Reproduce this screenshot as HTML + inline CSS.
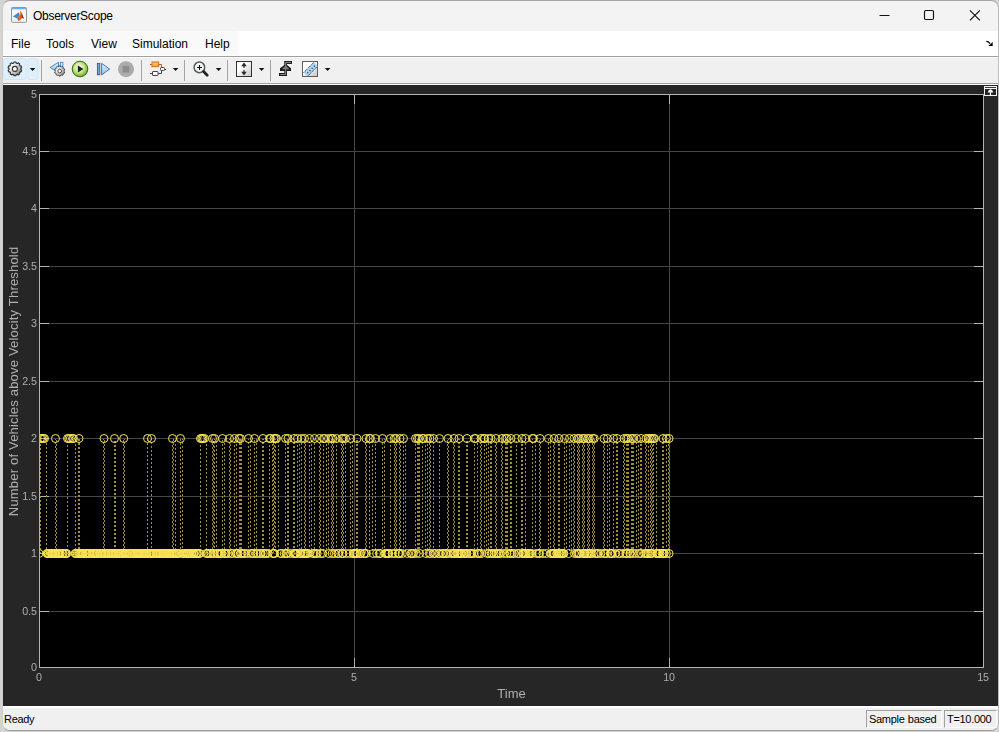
<!DOCTYPE html>
<html><head><meta charset="utf-8"><title>ObserverScope</title>
<style>
html,body{margin:0;padding:0}
body{width:999px;height:732px;overflow:hidden;background:#D4D4D2;position:relative;font-family:"Liberation Sans",Arial,sans-serif;font-size:12px;color:#000}
.win{position:absolute;left:2px;top:0;width:995px;height:729px;border:1px solid;border-color:#A4A4A4 #BCBCBC #9C9C9C #CDCDCB;border-radius:8px;background:#F3F3F3;overflow:hidden;box-sizing:content-box}
.abs{position:absolute}
.title{left:30px;top:7px;font-size:12px;letter-spacing:-0.28px;line-height:16px;white-space:nowrap}
.menubar{left:0;top:30px;width:995px;height:25px;background:#fff}
.menubg{left:0;top:0;width:235px;height:24px;background:#F9F9F9}
.menu span{position:absolute;top:6px;line-height:14px;white-space:nowrap}
.toolbar{left:0;top:56px;width:995px;height:26px;background:#F0F0F0;box-shadow:inset 0 1px 0 #FCFCFC}
.tbtop{left:0;top:55px;width:995px;height:1px;background:#A0A0A0}
.tbline{left:0;top:82px;width:995px;height:1px;background:#A0A0A0;border-bottom:1px solid #fff}
.plot{position:absolute;left:0;top:84px;will-change:transform}
.status{left:0;top:705px;width:995px;height:24px;background:#F0F0F0;border-top:2px solid #fff;box-sizing:border-box;font-size:11px}
.cell{position:absolute;top:2px;height:16px;border:1px solid;border-color:#A0A0A0 #fff #fff #A0A0A0;line-height:16px;text-align:center;white-space:nowrap}
</style></head><body>
<div class="win">
<svg class="abs" style="left:8px;top:6px" width="16" height="16" viewBox="0 0 16 16">
<rect x="0.5" y="0.5" width="15" height="14.800" rx="0.800" fill="#F6F6F6" stroke="#8E959C"/>
<rect x="1" y="1" width="14" height="1.300" fill="#6FAEE2"/>
<path d="M1.900 9.400l5.900-4.100.6 3.200-2.200 2.900z" fill="#3E8ACB"/>
<path d="M6.200 11.400l2-2.700 1.300-4.800c.4.300.8 1 1.200 2.200l2.300 5.800c-1.100-1-1.800-1.300-2.500-.4-.9 1.200-1.900 2.600-3.300 2.200z" fill="#E2521C"/>
<path d="M9.500 3.900c.5 1.700.2 4.800-1 7.200l-1.300 1.500c1.400-1.300 1.800-5 2.300-8.700z" fill="#F9B02A"/>
<path d="M10.700 6.100l2.300 5.800c-.9-.8-1.600-1.300-2.200-1z" fill="#9E241A"/>
</svg>
<div class="abs title">ObserverScope</div>
<svg class="abs" style="left:870px;top:-1px" width="125" height="30" viewBox="0 0 125 30" fill="none" stroke="#111" stroke-width="1.15">
<path d="M6.500 15.500h10"/>
<rect x="51.500" y="10.500" width="9" height="9" rx="1.2"/>
<path d="M96.900 10.300l10 10M106.900 10.300l-10 10"/>
</svg>
<div class="abs menubar"><div class="abs menubg"></div>
<div class="menu"><span style="left:8px">File</span><span style="left:43px">Tools</span><span style="left:88px">View</span><span style="left:129px">Simulation</span><span style="left:202px">Help</span></div>
<svg class="abs" style="left:982px;top:9px" width="10" height="9" viewBox="0 0 10 9"><path d="M1.300 1.400c1.400 0 2.600.6 3.800 2.200" stroke="#000" stroke-width="1.200" fill="none"/><path d="M7.700 6.100V1.900L3.300 6.100z" fill="#000"/></svg>
</div>
<div class="abs tbtop"></div>
<div class="abs toolbar">
<svg class="abs" style="left:0;top:0" width="995" height="27" viewBox="3 57 995 27">
<defs>
<linearGradient id="gg" x1="0" y1="0" x2="1" y2="1"><stop offset="0.15" stop-color="#FFFFFF"/><stop offset="0.6" stop-color="#C4C4C4"/><stop offset="1" stop-color="#6A6A6A"/></linearGradient>
<linearGradient id="gb" x1="0" y1="0" x2="0" y2="1"><stop offset="0" stop-color="#E2F0FB"/><stop offset="1" stop-color="#8FC0E8"/></linearGradient>
<radialGradient id="gp" cx="0.45" cy="0.42" r="0.62"><stop offset="0" stop-color="#FAFDF2"/><stop offset="0.45" stop-color="#D2EC9C"/><stop offset="0.8" stop-color="#86C23A"/><stop offset="1" stop-color="#4F8F1C"/></radialGradient>
<linearGradient id="gw" x1="0" y1="0" x2="1" y2="1"><stop offset="0.35" stop-color="#FFFFFF"/><stop offset="1" stop-color="#C4C4C4"/></linearGradient>
<linearGradient id="go" x1="0" y1="0" x2="0" y2="1"><stop offset="0" stop-color="#FBD088"/><stop offset="1" stop-color="#F4A040"/></linearGradient>
<path id="dd" d="M0 0h5.600l-2.800 3z" fill="#111"/>
<g id="gear"><path d="M-1.25 -5.77L-0.95 -6.83L0.95 -6.83L1.25 -5.77L2.38 -5.40L3.25 -6.09L4.79 -4.97L4.40 -3.93L5.10 -2.97L6.21 -3.02L6.79 -1.21L5.87 -0.59L5.87 0.59L6.79 1.21L6.21 3.02L5.10 2.97L4.40 3.93L4.79 4.97L3.25 6.09L2.38 5.40L1.25 5.77L0.95 6.83L-0.95 6.83L-1.25 5.77L-2.38 5.40L-3.25 6.09L-4.79 4.97L-4.40 3.93L-5.10 2.97L-6.21 3.02L-6.79 1.21L-5.87 0.59L-5.87 -0.59L-6.79 -1.21L-6.21 -3.02L-5.10 -2.97L-4.40 -3.93L-4.79 -4.97L-3.25 -6.09L-2.38 -5.40Z" fill="url(#gg)" stroke="#303030" stroke-width="1.100" stroke-linejoin="round"/><circle r="2.5" fill="#FDFDFD" stroke="#333" stroke-width="1.1"/></g>
</defs>
<!-- gear button highlight -->
<rect x="3.5" y="58.5" width="22.5" height="21" rx="2" fill="#E0EFFC" stroke="#CFE6FA" stroke-width="1"/>
<rect x="28" y="58.5" width="9.8" height="21" rx="2" fill="#E0EFFC" stroke="#CFE6FA" stroke-width="1"/>
<use href="#gear" x="14.9" y="68.9"/>
<use href="#dd" x="29.800" y="68"/>
<!-- separators -->
<g fill="#A3A3A3"><rect x="41" y="60" width="1" height="21"/><rect x="141" y="60" width="1" height="21"/><rect x="184" y="60" width="1" height="21"/><rect x="227" y="60" width="1" height="21"/><rect x="270" y="60" width="1" height="21"/></g>
<!-- step back -->
<path d="M58.500 62.200v10.500l-8.300-5.200z" fill="url(#gb)" stroke="#3F7FB8" stroke-width="0.900" stroke-linejoin="round"/>
<rect x="60.300" y="62.300" width="2.600" height="8" fill="url(#gb)" stroke="#3F7FB8" stroke-width="0.800"/>
<g transform="translate(59.700,71) scale(0.74)"><use href="#gear"/></g>
<!-- play -->
<circle cx="80" cy="69" r="7.800" fill="url(#gp)" stroke="#3C6E12" stroke-width="1"/>
<path d="M77.900 65.600v6.900l5.500-3.400z" fill="#1E1E1E"/>
<!-- step forward -->
<rect x="97.400" y="63.400" width="2.400" height="11.400" fill="#6FA3D6" stroke="#2A62A0" stroke-width="0.900"/>
<path d="M101.600 63.300v11.600l8-5.800z" fill="url(#gb)" stroke="#2F6AA6" stroke-width="0.900" stroke-linejoin="round"/>
<!-- stop -->
<circle cx="126" cy="69.200" r="8" fill="#ABABAB"/>
<rect x="122.700" y="65.900" width="6.600" height="6.600" fill="#8C8C8C"/>
<!-- model icon -->
<g fill="none" stroke-width="1">
<path d="M150 64.500h2M158.500 64.500h3v3" stroke="#C8581A"/>
<rect x="152" y="62" width="6.500" height="4.600" fill="url(#go)" stroke="#E2701C" stroke-width="1.1"/>
<rect x="160.500" y="67.500" width="4" height="3" fill="#fff" stroke="#444" rx="0.800"/>
<path d="M164.500 69.500h1.500M150 73.500h2.500M158 73.500h3.500v-3" stroke="#444"/>
<rect x="152.500" y="71.500" width="5.500" height="4" fill="#fff" stroke="#444" rx="0.500"/>
</g>
<use href="#dd" x="172.800" y="68"/>
<!-- zoom -->
<circle cx="199.400" cy="67.400" r="5.300" fill="#F2F7FC" stroke="#5A5A5A" stroke-width="1.500"/>
<path d="M197 67.500h5M199.500 65v5" stroke="#111" stroke-width="1.100"/>
<path d="M203.600 71.600l3.600 3.600" stroke="#222" stroke-width="2.800" stroke-linecap="round"/>
<use href="#dd" x="215.800" y="68"/>
<!-- scale axes -->
<rect x="236.500" y="61.500" width="15" height="15" fill="url(#gw)" stroke="#333" stroke-width="1"/>
<path d="M244 64v4M244 74v-4" stroke="#2A2A2A" stroke-width="1.200"/>
<path d="M241.200 66.200l2.800-3.600 2.800 3.600zM241.200 71.800l2.800 3.600 2.800-3.600z" fill="#2A2A2A"/>
<use href="#dd" x="258.800" y="68"/>
<!-- trigger step -->
<path d="M284.300 61h7.700v2.700h-5v4.600M285.800 63.900l5.200 4.400v2.700h-4v5h-8v-3h5.300v-2h-4.300v-2.700z" fill="#1A1A1A"/>
<path d="M284.300 61h7.700v2.700h-5v2h-2.700z" fill="#1A1A1A"/>
<path d="M280.300 74.500h5.400v-12.100h5.300" fill="none" stroke="#9A9A9A" stroke-width="0.900"/>
<path d="M285.700 65.600l3.900 3.700h-7.800z" fill="#7C7C7C"/>
<!-- ruler -->
<rect x="302.500" y="61.500" width="15" height="15" fill="url(#gw)" stroke="#5E5E5E" stroke-width="1"/>
<path d="M303.600 72.600l10.300-10.300 3.600 3.600v.6l-10 10z" fill="#A9D4F2"/>
<path d="M303.600 72.600l10.300-10.300M307.400 76.400l10.100-10.100" stroke="#2E2E2E" stroke-width="0.900" stroke-dasharray="1.300 0.700" fill="none"/>
<path d="M307.300 72.300l.9.900M309.500 70.100l.9.900M311.700 67.900l.9.900M313.900 65.700l.9.900" stroke="#1E3E5E" stroke-width="1.100"/>
<use href="#dd" x="324.800" y="68"/>
</svg>

</div>
<div class="abs tbline"></div>
<svg class="plot" width="995" height="621" viewBox="3 85 995 621" shape-rendering="crispEdges">
<defs>
<clipPath id="axclip"><rect x="39.5" y="94" width="944" height="573"/></clipPath>
<pattern id="d0" width="4" height="4" patternUnits="userSpaceOnUse" y="0"><rect width="4" height="2" fill="#A08E3A"/></pattern>
<pattern id="d1" width="4" height="4" patternUnits="userSpaceOnUse" y="1"><rect width="4" height="2" fill="#A08E3A"/></pattern>
<pattern id="d2" width="4" height="4" patternUnits="userSpaceOnUse" y="2"><rect width="4" height="2" fill="#A08E3A"/></pattern>
<pattern id="d3" width="4" height="4" patternUnits="userSpaceOnUse" y="3"><rect width="4" height="2" fill="#A08E3A"/></pattern>
<circle id="c" r="4" fill="none" stroke="#F9E557" stroke-width="1" shape-rendering="geometricPrecision"/>
</defs>
<rect x="3" y="85" width="995" height="621" fill="#262626"/>
<rect x="39" y="94" width="945" height="574" fill="#000"/>
<rect x="40" y="151" width="943" height="1" fill="#46464A"/><rect x="40" y="151" width="9" height="1" fill="#B4B4B4"/><rect x="974" y="151" width="9" height="1" fill="#B4B4B4"/><rect x="40" y="208" width="943" height="1" fill="#46464A"/><rect x="40" y="208" width="9" height="1" fill="#B4B4B4"/><rect x="974" y="208" width="9" height="1" fill="#B4B4B4"/><rect x="40" y="266" width="943" height="1" fill="#46464A"/><rect x="40" y="266" width="9" height="1" fill="#B4B4B4"/><rect x="974" y="266" width="9" height="1" fill="#B4B4B4"/><rect x="40" y="323" width="943" height="1" fill="#46464A"/><rect x="40" y="323" width="9" height="1" fill="#B4B4B4"/><rect x="974" y="323" width="9" height="1" fill="#B4B4B4"/><rect x="40" y="381" width="943" height="1" fill="#46464A"/><rect x="40" y="381" width="9" height="1" fill="#B4B4B4"/><rect x="974" y="381" width="9" height="1" fill="#B4B4B4"/><rect x="40" y="438" width="943" height="1" fill="#46464A"/><rect x="40" y="438" width="9" height="1" fill="#B4B4B4"/><rect x="974" y="438" width="9" height="1" fill="#B4B4B4"/><rect x="40" y="496" width="943" height="1" fill="#46464A"/><rect x="40" y="496" width="9" height="1" fill="#B4B4B4"/><rect x="974" y="496" width="9" height="1" fill="#B4B4B4"/><rect x="40" y="553" width="943" height="1" fill="#46464A"/><rect x="40" y="553" width="9" height="1" fill="#B4B4B4"/><rect x="974" y="553" width="9" height="1" fill="#B4B4B4"/><rect x="40" y="611" width="943" height="1" fill="#46464A"/><rect x="40" y="611" width="9" height="1" fill="#B4B4B4"/><rect x="974" y="611" width="9" height="1" fill="#B4B4B4"/><rect x="354" y="95" width="1" height="572" fill="#46464A"/><rect x="354" y="658" width="1" height="9" fill="#B4B4B4"/><rect x="354" y="95" width="1" height="9" fill="#B4B4B4"/><rect x="669" y="95" width="1" height="572" fill="#46464A"/><rect x="669" y="658" width="1" height="9" fill="#B4B4B4"/><rect x="669" y="95" width="1" height="9" fill="#B4B4B4"/>
<g clip-path="url(#axclip)">
<rect x="40" y="439" width="1" height="114" fill="url(#d0)"/><rect x="46" y="439" width="1" height="114" fill="url(#d3)"/><rect x="55" y="439" width="1" height="114" fill="url(#d2)"/><rect x="56" y="439" width="1" height="114" fill="url(#d0)"/><rect x="67" y="439" width="1" height="114" fill="url(#d1)"/><rect x="75" y="439" width="1" height="114" fill="url(#d0)"/><rect x="78" y="439" width="2" height="114" fill="url(#d3)"/><rect x="103" y="439" width="1" height="114" fill="url(#d2)"/><rect x="104" y="439" width="1" height="114" fill="url(#d0)"/><rect x="114" y="439" width="2" height="114" fill="url(#d1)"/><rect x="123" y="439" width="1" height="114" fill="url(#d0)"/><rect x="124" y="439" width="1" height="114" fill="url(#d2)"/><rect x="147" y="439" width="1" height="114" fill="url(#d3)"/><rect x="151" y="439" width="1" height="114" fill="url(#d2)"/><rect x="172" y="439" width="1" height="114" fill="url(#d1)"/><rect x="173" y="439" width="1" height="114" fill="url(#d3)"/><rect x="175" y="439" width="1" height="114" fill="url(#d0)"/><rect x="180" y="439" width="1" height="114" fill="url(#d3)"/><rect x="182" y="439" width="1" height="114" fill="url(#d2)"/><rect x="200" y="439" width="1" height="114" fill="url(#d1)"/><rect x="206" y="439" width="1" height="114" fill="url(#d0)"/><rect x="212" y="439" width="1" height="114" fill="url(#d3)"/><rect x="213" y="439" width="1" height="114" fill="url(#d1)"/><rect x="214" y="439" width="1" height="114" fill="url(#d2)"/><rect x="216" y="439" width="1" height="114" fill="url(#d1)"/><rect x="222" y="439" width="1" height="114" fill="url(#d0)"/><rect x="224" y="439" width="1" height="114" fill="url(#d3)"/><rect x="229" y="439" width="1" height="114" fill="url(#d2)"/><rect x="230" y="439" width="1" height="114" fill="url(#d0)"/><rect x="234" y="439" width="1" height="114" fill="url(#d1)"/><rect x="236" y="439" width="1" height="114" fill="url(#d0)"/><rect x="239" y="439" width="3" height="114" fill="url(#d3)"/><rect x="248" y="439" width="1" height="114" fill="url(#d2)"/><rect x="250" y="439" width="1" height="114" fill="url(#d1)"/><rect x="254" y="439" width="1" height="114" fill="url(#d0)"/><rect x="256" y="439" width="1" height="114" fill="url(#d3)"/><rect x="262" y="439" width="2" height="114" fill="url(#d2)"/><rect x="269" y="439" width="1" height="114" fill="url(#d1)"/><rect x="272" y="439" width="1" height="114" fill="url(#d0)"/><rect x="273" y="439" width="1" height="114" fill="url(#d3)"/><rect x="274" y="439" width="1" height="114" fill="url(#d1)"/><rect x="275" y="439" width="1" height="114" fill="url(#d2)"/><rect x="278" y="439" width="1" height="114" fill="url(#d1)"/><rect x="285" y="439" width="1" height="114" fill="url(#d0)"/><rect x="287" y="439" width="2" height="114" fill="url(#d3)"/><rect x="293" y="439" width="2" height="114" fill="url(#d2)"/><rect x="297" y="439" width="1" height="114" fill="url(#d1)"/><rect x="299" y="439" width="1" height="114" fill="url(#d0)"/><rect x="301" y="439" width="1" height="114" fill="url(#d3)"/><rect x="304" y="439" width="1" height="114" fill="url(#d2)"/><rect x="305" y="439" width="1" height="114" fill="url(#d0)"/><rect x="309" y="439" width="1" height="114" fill="url(#d1)"/><rect x="311" y="439" width="1" height="114" fill="url(#d0)"/><rect x="314" y="439" width="1" height="114" fill="url(#d3)"/><rect x="319" y="439" width="1" height="114" fill="url(#d2)"/><rect x="320" y="439" width="1" height="114" fill="url(#d0)"/><rect x="323" y="439" width="1" height="114" fill="url(#d1)"/><rect x="326" y="439" width="1" height="114" fill="url(#d0)"/><rect x="328" y="439" width="1" height="114" fill="url(#d3)"/><rect x="331" y="439" width="1" height="114" fill="url(#d2)"/><rect x="332" y="439" width="1" height="114" fill="url(#d0)"/><rect x="333" y="439" width="1" height="114" fill="url(#d2)"/><rect x="336" y="439" width="1" height="114" fill="url(#d1)"/><rect x="341" y="439" width="1" height="114" fill="url(#d0)"/><rect x="342" y="439" width="1" height="114" fill="url(#d2)"/><rect x="343" y="439" width="1" height="114" fill="url(#d0)"/><rect x="345" y="439" width="1" height="114" fill="url(#d3)"/><rect x="350" y="439" width="1" height="114" fill="url(#d2)"/><rect x="352" y="439" width="1" height="114" fill="url(#d1)"/><rect x="356" y="439" width="2" height="114" fill="url(#d0)"/><rect x="365" y="439" width="1" height="114" fill="url(#d3)"/><rect x="366" y="439" width="1" height="114" fill="url(#d1)"/><rect x="369" y="439" width="1" height="114" fill="url(#d2)"/><rect x="372" y="439" width="1" height="114" fill="url(#d1)"/><rect x="375" y="439" width="1" height="114" fill="url(#d0)"/><rect x="382" y="439" width="1" height="114" fill="url(#d3)"/><rect x="384" y="439" width="1" height="114" fill="url(#d2)"/><rect x="390" y="439" width="1" height="114" fill="url(#d1)"/><rect x="394" y="439" width="1" height="114" fill="url(#d0)"/><rect x="395" y="439" width="1" height="114" fill="url(#d2)"/><rect x="396" y="439" width="1" height="114" fill="url(#d0)"/><rect x="399" y="439" width="1" height="114" fill="url(#d3)"/><rect x="400" y="439" width="1" height="114" fill="url(#d1)"/><rect x="403" y="439" width="1" height="114" fill="url(#d2)"/><rect x="405" y="439" width="1" height="114" fill="url(#d1)"/><rect x="415" y="439" width="1" height="114" fill="url(#d0)"/><rect x="417" y="439" width="3" height="114" fill="url(#d3)"/><rect x="422" y="439" width="1" height="114" fill="url(#d2)"/><rect x="425" y="439" width="1" height="114" fill="url(#d1)"/><rect x="427" y="439" width="1" height="114" fill="url(#d0)"/><rect x="429" y="439" width="1" height="114" fill="url(#d3)"/><rect x="430" y="439" width="1" height="114" fill="url(#d1)"/><rect x="433" y="439" width="1" height="114" fill="url(#d2)"/><rect x="439" y="439" width="1" height="114" fill="url(#d1)"/><rect x="447" y="439" width="1" height="114" fill="url(#d0)"/><rect x="448" y="439" width="1" height="114" fill="url(#d2)"/><rect x="453" y="439" width="1" height="114" fill="url(#d3)"/><rect x="454" y="439" width="1" height="114" fill="url(#d1)"/><rect x="458" y="439" width="2" height="114" fill="url(#d2)"/><rect x="466" y="439" width="2" height="114" fill="url(#d1)"/><rect x="474" y="439" width="1" height="114" fill="url(#d0)"/><rect x="477" y="439" width="1" height="114" fill="url(#d3)"/><rect x="480" y="439" width="1" height="114" fill="url(#d2)"/><rect x="481" y="439" width="1" height="114" fill="url(#d0)"/><rect x="484" y="439" width="1" height="114" fill="url(#d1)"/><rect x="486" y="439" width="1" height="114" fill="url(#d0)"/><rect x="488" y="439" width="1" height="114" fill="url(#d3)"/><rect x="490" y="439" width="2" height="114" fill="url(#d2)"/><rect x="495" y="439" width="1" height="114" fill="url(#d1)"/><rect x="496" y="439" width="1" height="114" fill="url(#d3)"/><rect x="501" y="439" width="1" height="114" fill="url(#d0)"/><rect x="502" y="439" width="1" height="114" fill="url(#d2)"/><rect x="505" y="439" width="3" height="114" fill="url(#d3)"/><rect x="510" y="439" width="2" height="114" fill="url(#d2)"/><rect x="516" y="439" width="1" height="114" fill="url(#d1)"/><rect x="521" y="439" width="2" height="114" fill="url(#d0)"/><rect x="525" y="439" width="1" height="114" fill="url(#d3)"/><rect x="532" y="439" width="1" height="114" fill="url(#d2)"/><rect x="535" y="439" width="1" height="114" fill="url(#d1)"/><rect x="539" y="439" width="1" height="114" fill="url(#d0)"/><rect x="540" y="439" width="1" height="114" fill="url(#d2)"/><rect x="548" y="439" width="1" height="114" fill="url(#d3)"/><rect x="550" y="439" width="1" height="114" fill="url(#d2)"/><rect x="553" y="439" width="1" height="114" fill="url(#d1)"/><rect x="554" y="439" width="1" height="114" fill="url(#d3)"/><rect x="558" y="439" width="2" height="114" fill="url(#d0)"/><rect x="564" y="439" width="1" height="114" fill="url(#d3)"/><rect x="566" y="439" width="1" height="114" fill="url(#d2)"/><rect x="569" y="439" width="1" height="114" fill="url(#d1)"/><rect x="571" y="439" width="1" height="114" fill="url(#d0)"/><rect x="573" y="439" width="1" height="114" fill="url(#d3)"/><rect x="574" y="439" width="1" height="114" fill="url(#d1)"/><rect x="577" y="439" width="1" height="114" fill="url(#d2)"/><rect x="578" y="439" width="1" height="114" fill="url(#d0)"/><rect x="579" y="439" width="1" height="114" fill="url(#d2)"/><rect x="582" y="439" width="1" height="114" fill="url(#d1)"/><rect x="583" y="439" width="1" height="114" fill="url(#d3)"/><rect x="584" y="439" width="1" height="114" fill="url(#d1)"/><rect x="587" y="439" width="1" height="114" fill="url(#d0)"/><rect x="588" y="439" width="1" height="114" fill="url(#d2)"/><rect x="589" y="439" width="1" height="114" fill="url(#d0)"/><rect x="592" y="439" width="1" height="114" fill="url(#d3)"/><rect x="593" y="439" width="1" height="114" fill="url(#d1)"/><rect x="594" y="439" width="1" height="114" fill="url(#d3)"/><rect x="603" y="439" width="1" height="114" fill="url(#d2)"/><rect x="604" y="439" width="1" height="114" fill="url(#d0)"/><rect x="607" y="439" width="1" height="114" fill="url(#d1)"/><rect x="609" y="439" width="1" height="114" fill="url(#d0)"/><rect x="613" y="439" width="1" height="114" fill="url(#d3)"/><rect x="616" y="439" width="2" height="114" fill="url(#d2)"/><rect x="623" y="439" width="1" height="114" fill="url(#d1)"/><rect x="624" y="439" width="1" height="114" fill="url(#d3)"/><rect x="626" y="439" width="3" height="114" fill="url(#d0)"/><rect x="631" y="439" width="3" height="114" fill="url(#d3)"/><rect x="636" y="439" width="1" height="114" fill="url(#d2)"/><rect x="638" y="439" width="1" height="114" fill="url(#d1)"/><rect x="640" y="439" width="2" height="114" fill="url(#d0)"/><rect x="645" y="439" width="1" height="114" fill="url(#d3)"/><rect x="646" y="439" width="1" height="114" fill="url(#d1)"/><rect x="648" y="439" width="1" height="114" fill="url(#d2)"/><rect x="650" y="439" width="1" height="114" fill="url(#d1)"/><rect x="651" y="439" width="1" height="114" fill="url(#d3)"/><rect x="652" y="439" width="1" height="114" fill="url(#d1)"/><rect x="653" y="439" width="1" height="114" fill="url(#d0)"/><rect x="656" y="439" width="1" height="114" fill="url(#d3)"/><rect x="662" y="439" width="2" height="114" fill="url(#d2)"/><rect x="666" y="439" width="1" height="114" fill="url(#d1)"/><rect x="668" y="439" width="1" height="114" fill="url(#d0)"/><rect x="669" y="439" width="1" height="114" fill="url(#d2)"/>
<use href="#c" x="40.5" y="438.5"/><use href="#c" x="41.8" y="438.5"/><use href="#c" x="43.4" y="438.5"/><use href="#c" x="44.5" y="438.5"/><use href="#c" x="55.5" y="438.5"/><use href="#c" x="67.5" y="438.5"/><use href="#c" x="68.8" y="438.5"/><use href="#c" x="70.4" y="438.5"/><use href="#c" x="72.5" y="438.5"/><use href="#c" x="73.5" y="438.5"/><use href="#c" x="79" y="438.5"/><use href="#c" x="104" y="438.5"/><use href="#c" x="114.5" y="438.5"/><use href="#c" x="123.7" y="438.5"/><use href="#c" x="147.5" y="438.5"/><use href="#c" x="151.5" y="438.5"/><use href="#c" x="172.5" y="438.5"/><use href="#c" x="180.5" y="438.5"/><use href="#c" x="200.5" y="438.5"/><use href="#c" x="201.8" y="438.5"/><use href="#c" x="203.0" y="438.5"/><use href="#c" x="204.5" y="438.5"/><use href="#c" x="212.5" y="438.5"/><use href="#c" x="214.5" y="438.5"/><use href="#c" x="222.5" y="438.5"/><use href="#c" x="229.5" y="438.5"/><use href="#c" x="234.5" y="438.5"/><use href="#c" x="239" y="438.5"/><use href="#c" x="240.5" y="438.5"/><use href="#c" x="248.5" y="438.5"/><use href="#c" x="254.5" y="438.5"/><use href="#c" x="263" y="438.5"/><use href="#c" x="269.5" y="438.5"/><use href="#c" x="270.5" y="438.5"/><use href="#c" x="274" y="438.5"/><use href="#c" x="275.5" y="438.5"/><use href="#c" x="276.5" y="438.5"/><use href="#c" x="285.5" y="438.5"/><use href="#c" x="288" y="438.5"/><use href="#c" x="294" y="438.5"/><use href="#c" x="297.5" y="438.5"/><use href="#c" x="301.5" y="438.5"/><use href="#c" x="304.5" y="438.5"/><use href="#c" x="309.5" y="438.5"/><use href="#c" x="314.5" y="438.5"/><use href="#c" x="319.5" y="438.5"/><use href="#c" x="323.5" y="438.5"/><use href="#c" x="324.5" y="438.5"/><use href="#c" x="328.5" y="438.5"/><use href="#c" x="331.3" y="438.5"/><use href="#c" x="332.8" y="438.5"/><use href="#c" x="336.5" y="438.5"/><use href="#c" x="341.8" y="438.5"/><use href="#c" x="343.3" y="438.5"/><use href="#c" x="345.5" y="438.5"/><use href="#c" x="350.5" y="438.5"/><use href="#c" x="357" y="438.5"/><use href="#c" x="366" y="438.5"/><use href="#c" x="369.5" y="438.5"/><use href="#c" x="370.5" y="438.5"/><use href="#c" x="375.5" y="438.5"/><use href="#c" x="382.5" y="438.5"/><use href="#c" x="390.5" y="438.5"/><use href="#c" x="394.3" y="438.5"/><use href="#c" x="395.8" y="438.5"/><use href="#c" x="400" y="438.5"/><use href="#c" x="403.5" y="438.5"/><use href="#c" x="415.5" y="438.5"/><use href="#c" x="417.5" y="438.5"/><use href="#c" x="419.0" y="438.5"/><use href="#c" x="422.5" y="438.5"/><use href="#c" x="423.5" y="438.5"/><use href="#c" x="427.5" y="438.5"/><use href="#c" x="430" y="438.5"/><use href="#c" x="433.5" y="438.5"/><use href="#c" x="439.5" y="438.5"/><use href="#c" x="448" y="438.5"/><use href="#c" x="454" y="438.5"/><use href="#c" x="459" y="438.5"/><use href="#c" x="467" y="438.5"/><use href="#c" x="474.5" y="438.5"/><use href="#c" x="475.5" y="438.5"/><use href="#c" x="481" y="438.5"/><use href="#c" x="484" y="438.5"/><use href="#c" x="484.5" y="438.5"/><use href="#c" x="488.5" y="438.5"/><use href="#c" x="491" y="438.5"/><use href="#c" x="496" y="438.5"/><use href="#c" x="502" y="438.5"/><use href="#c" x="505.5" y="438.5"/><use href="#c" x="507.0" y="438.5"/><use href="#c" x="511" y="438.5"/><use href="#c" x="516.5" y="438.5"/><use href="#c" x="522" y="438.5"/><use href="#c" x="525.5" y="438.5"/><use href="#c" x="532.5" y="438.5"/><use href="#c" x="533.5" y="438.5"/><use href="#c" x="540" y="438.5"/><use href="#c" x="548.5" y="438.5"/><use href="#c" x="554" y="438.5"/><use href="#c" x="559" y="438.5"/><use href="#c" x="564.5" y="438.5"/><use href="#c" x="569.5" y="438.5"/><use href="#c" x="574" y="438.5"/><use href="#c" x="577.8" y="438.5"/><use href="#c" x="579.3" y="438.5"/><use href="#c" x="582.8" y="438.5"/><use href="#c" x="584.3" y="438.5"/><use href="#c" x="587.8" y="438.5"/><use href="#c" x="589.3" y="438.5"/><use href="#c" x="592.8" y="438.5"/><use href="#c" x="594.3" y="438.5"/><use href="#c" x="604" y="438.5"/><use href="#c" x="607.5" y="438.5"/><use href="#c" x="613.5" y="438.5"/><use href="#c" x="617" y="438.5"/><use href="#c" x="624" y="438.5"/><use href="#c" x="626.5" y="438.5"/><use href="#c" x="628.0" y="438.5"/><use href="#c" x="631.5" y="438.5"/><use href="#c" x="633.0" y="438.5"/><use href="#c" x="636.5" y="438.5"/><use href="#c" x="641" y="438.5"/><use href="#c" x="646" y="438.5"/><use href="#c" x="648.5" y="438.5"/><use href="#c" x="650.3" y="438.5"/><use href="#c" x="651.8" y="438.5"/><use href="#c" x="653.5" y="438.5"/><use href="#c" x="654.5" y="438.5"/><use href="#c" x="663" y="438.5"/><use href="#c" x="666.5" y="438.5"/><use href="#c" x="669" y="438.5"/><use href="#c" x="39.0" y="553.5"/><use href="#c" x="47.0" y="553.5"/><use href="#c" x="47.5" y="553.5"/><use href="#c" x="48.2" y="553.5"/><use href="#c" x="48.7" y="553.5"/><use href="#c" x="50.3" y="553.5"/><use href="#c" x="51.3" y="553.5"/><use href="#c" x="51.7" y="553.5"/><use href="#c" x="52.2" y="553.5"/><use href="#c" x="52.9" y="553.5"/><use href="#c" x="53.3" y="553.5"/><use href="#c" x="54.3" y="553.5"/><use href="#c" x="54.7" y="553.5"/><use href="#c" x="55.4" y="553.5"/><use href="#c" x="55.8" y="553.5"/><use href="#c" x="57.4" y="553.5"/><use href="#c" x="58.0" y="553.5"/><use href="#c" x="58.8" y="553.5"/><use href="#c" x="59.8" y="553.5"/><use href="#c" x="60.4" y="553.5"/><use href="#c" x="62.0" y="553.5"/><use href="#c" x="62.5" y="553.5"/><use href="#c" x="63.3" y="553.5"/><use href="#c" x="64.9" y="553.5"/><use href="#c" x="65.5" y="553.5"/><use href="#c" x="66.0" y="553.5"/><use href="#c" x="66.7" y="553.5"/><use href="#c" x="75.1" y="553.5"/><use href="#c" x="76.0" y="553.5"/><use href="#c" x="77.2" y="553.5"/><use href="#c" x="78.4" y="553.5"/><use href="#c" x="79.3" y="553.5"/><use href="#c" x="80.1" y="553.5"/><use href="#c" x="80.8" y="553.5"/><use href="#c" x="81.4" y="553.5"/><use href="#c" x="82.1" y="553.5"/><use href="#c" x="82.6" y="553.5"/><use href="#c" x="83.4" y="553.5"/><use href="#c" x="85.0" y="553.5"/><use href="#c" x="86.2" y="553.5"/><use href="#c" x="87.1" y="553.5"/><use href="#c" x="88.3" y="553.5"/><use href="#c" x="89.1" y="553.5"/><use href="#c" x="89.6" y="553.5"/><use href="#c" x="90.1" y="553.5"/><use href="#c" x="91.7" y="553.5"/><use href="#c" x="92.7" y="553.5"/><use href="#c" x="93.3" y="553.5"/><use href="#c" x="94.2" y="553.5"/><use href="#c" x="94.8" y="553.5"/><use href="#c" x="96.0" y="553.5"/><use href="#c" x="97.0" y="553.5"/><use href="#c" x="97.4" y="553.5"/><use href="#c" x="97.9" y="553.5"/><use href="#c" x="99.5" y="553.5"/><use href="#c" x="100.4" y="553.5"/><use href="#c" x="101.3" y="553.5"/><use href="#c" x="102.2" y="553.5"/><use href="#c" x="103.4" y="553.5"/><use href="#c" x="104.6" y="553.5"/><use href="#c" x="105.1" y="553.5"/><use href="#c" x="105.6" y="553.5"/><use href="#c" x="106.4" y="553.5"/><use href="#c" x="107.6" y="553.5"/><use href="#c" x="108.1" y="553.5"/><use href="#c" x="108.5" y="553.5"/><use href="#c" x="109.3" y="553.5"/><use href="#c" x="110.5" y="553.5"/><use href="#c" x="111.3" y="553.5"/><use href="#c" x="112.3" y="553.5"/><use href="#c" x="113.2" y="553.5"/><use href="#c" x="113.6" y="553.5"/><use href="#c" x="114.8" y="553.5"/><use href="#c" x="115.7" y="553.5"/><use href="#c" x="116.3" y="553.5"/><use href="#c" x="116.8" y="553.5"/><use href="#c" x="118.0" y="553.5"/><use href="#c" x="118.4" y="553.5"/><use href="#c" x="119.1" y="553.5"/><use href="#c" x="119.9" y="553.5"/><use href="#c" x="120.5" y="553.5"/><use href="#c" x="121.2" y="553.5"/><use href="#c" x="122.2" y="553.5"/><use href="#c" x="123.2" y="553.5"/><use href="#c" x="124.4" y="553.5"/><use href="#c" x="124.9" y="553.5"/><use href="#c" x="125.5" y="553.5"/><use href="#c" x="126.7" y="553.5"/><use href="#c" x="127.7" y="553.5"/><use href="#c" x="129.3" y="553.5"/><use href="#c" x="130.1" y="553.5"/><use href="#c" x="130.7" y="553.5"/><use href="#c" x="131.7" y="553.5"/><use href="#c" x="133.3" y="553.5"/><use href="#c" x="134.1" y="553.5"/><use href="#c" x="135.1" y="553.5"/><use href="#c" x="136.0" y="553.5"/><use href="#c" x="137.0" y="553.5"/><use href="#c" x="137.7" y="553.5"/><use href="#c" x="138.3" y="553.5"/><use href="#c" x="138.8" y="553.5"/><use href="#c" x="139.4" y="553.5"/><use href="#c" x="140.0" y="553.5"/><use href="#c" x="140.7" y="553.5"/><use href="#c" x="141.4" y="553.5"/><use href="#c" x="141.8" y="553.5"/><use href="#c" x="143.0" y="553.5"/><use href="#c" x="143.6" y="553.5"/><use href="#c" x="144.4" y="553.5"/><use href="#c" x="145.2" y="553.5"/><use href="#c" x="145.6" y="553.5"/><use href="#c" x="146.2" y="553.5"/><use href="#c" x="147.2" y="553.5"/><use href="#c" x="148.8" y="553.5"/><use href="#c" x="149.7" y="553.5"/><use href="#c" x="150.6" y="553.5"/><use href="#c" x="151.2" y="553.5"/><use href="#c" x="152.8" y="553.5"/><use href="#c" x="153.2" y="553.5"/><use href="#c" x="154.4" y="553.5"/><use href="#c" x="156.0" y="553.5"/><use href="#c" x="157.0" y="553.5"/><use href="#c" x="158.0" y="553.5"/><use href="#c" x="159.0" y="553.5"/><use href="#c" x="160.0" y="553.5"/><use href="#c" x="160.5" y="553.5"/><use href="#c" x="161.7" y="553.5"/><use href="#c" x="162.7" y="553.5"/><use href="#c" x="163.1" y="553.5"/><use href="#c" x="163.8" y="553.5"/><use href="#c" x="164.3" y="553.5"/><use href="#c" x="165.0" y="553.5"/><use href="#c" x="166.2" y="553.5"/><use href="#c" x="166.8" y="553.5"/><use href="#c" x="167.3" y="553.5"/><use href="#c" x="168.2" y="553.5"/><use href="#c" x="168.6" y="553.5"/><use href="#c" x="169.1" y="553.5"/><use href="#c" x="169.5" y="553.5"/><use href="#c" x="170.1" y="553.5"/><use href="#c" x="171.7" y="553.5"/><use href="#c" x="172.2" y="553.5"/><use href="#c" x="173.1" y="553.5"/><use href="#c" x="173.5" y="553.5"/><use href="#c" x="174.0" y="553.5"/><use href="#c" x="174.7" y="553.5"/><use href="#c" x="175.7" y="553.5"/><use href="#c" x="176.3" y="553.5"/><use href="#c" x="177.1" y="553.5"/><use href="#c" x="178.0" y="553.5"/><use href="#c" x="178.9" y="553.5"/><use href="#c" x="182.3" y="553.5"/><use href="#c" x="183.5" y="553.5"/><use href="#c" x="184.7" y="553.5"/><use href="#c" x="185.9" y="553.5"/><use href="#c" x="186.7" y="553.5"/><use href="#c" x="187.2" y="553.5"/><use href="#c" x="187.8" y="553.5"/><use href="#c" x="188.3" y="553.5"/><use href="#c" x="189.2" y="553.5"/><use href="#c" x="190.0" y="553.5"/><use href="#c" x="191.2" y="553.5"/><use href="#c" x="191.8" y="553.5"/><use href="#c" x="193.4" y="553.5"/><use href="#c" x="193.8" y="553.5"/><use href="#c" x="194.5" y="553.5"/><use href="#c" x="196.1" y="553.5"/><use href="#c" x="197.0" y="553.5"/><use href="#c" x="197.6" y="553.5"/><use href="#c" x="199.2" y="553.5"/><use href="#c" x="199.6" y="553.5"/><use href="#c" x="206.4" y="553.5"/><use href="#c" x="207.3" y="553.5"/><use href="#c" x="208.0" y="553.5"/><use href="#c" x="209.6" y="553.5"/><use href="#c" x="211.2" y="553.5"/><use href="#c" x="212.8" y="553.5"/><use href="#c" x="213.7" y="553.5"/><use href="#c" x="216.8" y="553.5"/><use href="#c" x="217.5" y="553.5"/><use href="#c" x="218.2" y="553.5"/><use href="#c" x="219.8" y="553.5"/><use href="#c" x="221.0" y="553.5"/><use href="#c" x="221.9" y="553.5"/><use href="#c" x="224.7" y="553.5"/><use href="#c" x="225.5" y="553.5"/><use href="#c" x="226.2" y="553.5"/><use href="#c" x="228.0" y="553.5"/><use href="#c" x="230.8" y="553.5"/><use href="#c" x="232.6" y="553.5"/><use href="#c" x="236.2" y="553.5"/><use href="#c" x="236.9" y="553.5"/><use href="#c" x="238.0" y="553.5"/><use href="#c" x="240.8" y="553.5"/><use href="#c" x="241.9" y="553.5"/><use href="#c" x="243.7" y="553.5"/><use href="#c" x="244.8" y="553.5"/><use href="#c" x="247.6" y="553.5"/><use href="#c" x="250.9" y="553.5"/><use href="#c" x="252.7" y="553.5"/><use href="#c" x="253.4" y="553.5"/><use href="#c" x="256.3" y="553.5"/><use href="#c" x="257.4" y="553.5"/><use href="#c" x="260.2" y="553.5"/><use href="#c" x="261.1" y="553.5"/><use href="#c" x="263.3" y="553.5"/><use href="#c" x="265.1" y="553.5"/><use href="#c" x="265.8" y="553.5"/><use href="#c" x="268.0" y="553.5"/><use href="#c" x="273.0" y="553.5"/><use href="#c" x="273.7" y="553.5"/><use href="#c" x="274.6" y="553.5"/><use href="#c" x="280.6" y="553.5"/><use href="#c" x="281.5" y="553.5"/><use href="#c" x="284.3" y="553.5"/><use href="#c" x="286.1" y="553.5"/><use href="#c" x="287.0" y="553.5"/><use href="#c" x="290.4" y="553.5"/><use href="#c" x="293.8" y="553.5"/><use href="#c" x="294.7" y="553.5"/><use href="#c" x="295.2" y="553.5"/><use href="#c" x="295.7" y="553.5"/><use href="#c" x="296.4" y="553.5"/><use href="#c" x="299.8" y="553.5"/><use href="#c" x="300.7" y="553.5"/><use href="#c" x="302.9" y="553.5"/><use href="#c" x="304.0" y="553.5"/><use href="#c" x="305.1" y="553.5"/><use href="#c" x="305.6" y="553.5"/><use href="#c" x="307.0" y="553.5"/><use href="#c" x="308.1" y="553.5"/><use href="#c" x="312.9" y="553.5"/><use href="#c" x="314.0" y="553.5"/><use href="#c" x="315.8" y="553.5"/><use href="#c" x="317.2" y="553.5"/><use href="#c" x="320.6" y="553.5"/><use href="#c" x="322.8" y="553.5"/><use href="#c" x="328.8" y="553.5"/><use href="#c" x="332.2" y="553.5"/><use href="#c" x="334.4" y="553.5"/><use href="#c" x="337.8" y="553.5"/><use href="#c" x="338.7" y="553.5"/><use href="#c" x="342.1" y="553.5"/><use href="#c" x="343.0" y="553.5"/><use href="#c" x="346.4" y="553.5"/><use href="#c" x="349.8" y="553.5"/><use href="#c" x="353.1" y="553.5"/><use href="#c" x="354.0" y="553.5"/><use href="#c" x="354.5" y="553.5"/><use href="#c" x="355.4" y="553.5"/><use href="#c" x="356.3" y="553.5"/><use href="#c" x="357.2" y="553.5"/><use href="#c" x="360.0" y="553.5"/><use href="#c" x="360.7" y="553.5"/><use href="#c" x="364.1" y="553.5"/><use href="#c" x="364.6" y="553.5"/><use href="#c" x="366.4" y="553.5"/><use href="#c" x="373.2" y="553.5"/><use href="#c" x="376.6" y="553.5"/><use href="#c" x="379.4" y="553.5"/><use href="#c" x="380.1" y="553.5"/><use href="#c" x="385.1" y="553.5"/><use href="#c" x="386.2" y="553.5"/><use href="#c" x="387.6" y="553.5"/><use href="#c" x="388.1" y="553.5"/><use href="#c" x="388.8" y="553.5"/><use href="#c" x="392.2" y="553.5"/><use href="#c" x="395.0" y="553.5"/><use href="#c" x="398.4" y="553.5"/><use href="#c" x="398.9" y="553.5"/><use href="#c" x="399.6" y="553.5"/><use href="#c" x="402.4" y="553.5"/><use href="#c" x="407.6" y="553.5"/><use href="#c" x="411.0" y="553.5"/><use href="#c" x="412.1" y="553.5"/><use href="#c" x="413.5" y="553.5"/><use href="#c" x="416.3" y="553.5"/><use href="#c" x="419.7" y="553.5"/><use href="#c" x="425.9" y="553.5"/><use href="#c" x="429.3" y="553.5"/><use href="#c" x="430.4" y="553.5"/><use href="#c" x="433.8" y="553.5"/><use href="#c" x="435.2" y="553.5"/><use href="#c" x="438.6" y="553.5"/><use href="#c" x="439.7" y="553.5"/><use href="#c" x="442.5" y="553.5"/><use href="#c" x="443.4" y="553.5"/><use href="#c" x="445.6" y="553.5"/><use href="#c" x="446.3" y="553.5"/><use href="#c" x="448.5" y="553.5"/><use href="#c" x="451.3" y="553.5"/><use href="#c" x="453.1" y="553.5"/><use href="#c" x="453.8" y="553.5"/><use href="#c" x="454.9" y="553.5"/><use href="#c" x="457.1" y="553.5"/><use href="#c" x="457.8" y="553.5"/><use href="#c" x="458.9" y="553.5"/><use href="#c" x="460.3" y="553.5"/><use href="#c" x="461.0" y="553.5"/><use href="#c" x="461.9" y="553.5"/><use href="#c" x="463.7" y="553.5"/><use href="#c" x="464.6" y="553.5"/><use href="#c" x="466.0" y="553.5"/><use href="#c" x="466.9" y="553.5"/><use href="#c" x="469.7" y="553.5"/><use href="#c" x="470.8" y="553.5"/><use href="#c" x="471.5" y="553.5"/><use href="#c" x="473.7" y="553.5"/><use href="#c" x="477.4" y="553.5"/><use href="#c" x="478.5" y="553.5"/><use href="#c" x="479.4" y="553.5"/><use href="#c" x="481.6" y="553.5"/><use href="#c" x="487.2" y="553.5"/><use href="#c" x="489.0" y="553.5"/><use href="#c" x="491.2" y="553.5"/><use href="#c" x="492.3" y="553.5"/><use href="#c" x="494.1" y="553.5"/><use href="#c" x="495.9" y="553.5"/><use href="#c" x="496.6" y="553.5"/><use href="#c" x="498.4" y="553.5"/><use href="#c" x="498.9" y="553.5"/><use href="#c" x="500.7" y="553.5"/><use href="#c" x="504.1" y="553.5"/><use href="#c" x="506.9" y="553.5"/><use href="#c" x="509.7" y="553.5"/><use href="#c" x="510.2" y="553.5"/><use href="#c" x="512.4" y="553.5"/><use href="#c" x="514.2" y="553.5"/><use href="#c" x="517.6" y="553.5"/><use href="#c" x="519.0" y="553.5"/><use href="#c" x="522.4" y="553.5"/><use href="#c" x="523.1" y="553.5"/><use href="#c" x="523.8" y="553.5"/><use href="#c" x="524.9" y="553.5"/><use href="#c" x="525.6" y="553.5"/><use href="#c" x="526.3" y="553.5"/><use href="#c" x="527.7" y="553.5"/><use href="#c" x="529.1" y="553.5"/><use href="#c" x="529.6" y="553.5"/><use href="#c" x="530.5" y="553.5"/><use href="#c" x="531.9" y="553.5"/><use href="#c" x="536.4" y="553.5"/><use href="#c" x="538.6" y="553.5"/><use href="#c" x="539.5" y="553.5"/><use href="#c" x="542.9" y="553.5"/><use href="#c" x="546.3" y="553.5"/><use href="#c" x="550.9" y="553.5"/><use href="#c" x="551.6" y="553.5"/><use href="#c" x="553.0" y="553.5"/><use href="#c" x="553.5" y="553.5"/><use href="#c" x="554.4" y="553.5"/><use href="#c" x="556.6" y="553.5"/><use href="#c" x="557.3" y="553.5"/><use href="#c" x="558.7" y="553.5"/><use href="#c" x="559.2" y="553.5"/><use href="#c" x="559.9" y="553.5"/><use href="#c" x="561.3" y="553.5"/><use href="#c" x="562.0" y="553.5"/><use href="#c" x="563.1" y="553.5"/><use href="#c" x="563.8" y="553.5"/><use href="#c" x="568.7" y="553.5"/><use href="#c" x="574.4" y="553.5"/><use href="#c" x="576.6" y="553.5"/><use href="#c" x="578.0" y="553.5"/><use href="#c" x="578.9" y="553.5"/><use href="#c" x="579.4" y="553.5"/><use href="#c" x="582.8" y="553.5"/><use href="#c" x="583.9" y="553.5"/><use href="#c" x="584.6" y="553.5"/><use href="#c" x="585.5" y="553.5"/><use href="#c" x="586.9" y="553.5"/><use href="#c" x="587.4" y="553.5"/><use href="#c" x="588.3" y="553.5"/><use href="#c" x="589.4" y="553.5"/><use href="#c" x="590.8" y="553.5"/><use href="#c" x="592.2" y="553.5"/><use href="#c" x="595.6" y="553.5"/><use href="#c" x="596.7" y="553.5"/><use href="#c" x="598.1" y="553.5"/><use href="#c" x="600.9" y="553.5"/><use href="#c" x="604.3" y="553.5"/><use href="#c" x="605.2" y="553.5"/><use href="#c" x="606.6" y="553.5"/><use href="#c" x="610.3" y="553.5"/><use href="#c" x="610.8" y="553.5"/><use href="#c" x="611.3" y="553.5"/><use href="#c" x="611.8" y="553.5"/><use href="#c" x="615.2" y="553.5"/><use href="#c" x="618.6" y="553.5"/><use href="#c" x="619.7" y="553.5"/><use href="#c" x="623.1" y="553.5"/><use href="#c" x="625.9" y="553.5"/><use href="#c" x="627.0" y="553.5"/><use href="#c" x="629.8" y="553.5"/><use href="#c" x="630.5" y="553.5"/><use href="#c" x="632.7" y="553.5"/><use href="#c" x="635.5" y="553.5"/><use href="#c" x="638.9" y="553.5"/><use href="#c" x="641.1" y="553.5"/><use href="#c" x="644.5" y="553.5"/><use href="#c" x="645.9" y="553.5"/><use href="#c" x="647.0" y="553.5"/><use href="#c" x="648.1" y="553.5"/><use href="#c" x="649.9" y="553.5"/><use href="#c" x="651.0" y="553.5"/><use href="#c" x="651.9" y="553.5"/><use href="#c" x="656.4" y="553.5"/><use href="#c" x="657.3" y="553.5"/><use href="#c" x="657.8" y="553.5"/><use href="#c" x="658.5" y="553.5"/><use href="#c" x="659.9" y="553.5"/><use href="#c" x="662.1" y="553.5"/><use href="#c" x="663.0" y="553.5"/><use href="#c" x="663.5" y="553.5"/><use href="#c" x="664.2" y="553.5"/><use href="#c" x="666.4" y="553.5"/><use href="#c" x="669" y="553.5"/>
</g>
<path d="M39.5 94.5H983.5V667.5H39.5Z" fill="none" stroke="#B4B4B4" stroke-width="1"/>
<g font-family="Liberation Sans, Arial, sans-serif" font-size="10.7" fill="#AFAFAF" shape-rendering="geometricPrecision">
<text x="37" y="98.3" text-anchor="end">5</text><text x="37" y="155.3" text-anchor="end">4.5</text><text x="37" y="212.3" text-anchor="end">4</text><text x="37" y="270.3" text-anchor="end">3.5</text><text x="37" y="327.3" text-anchor="end">3</text><text x="37" y="385.3" text-anchor="end">2.5</text><text x="37" y="442.3" text-anchor="end">2</text><text x="37" y="500.3" text-anchor="end">1.5</text><text x="37" y="557.3" text-anchor="end">1</text><text x="37" y="615.3" text-anchor="end">0.5</text><text x="37" y="671.3" text-anchor="end">0</text>
<text x="39.1" y="680.8" text-anchor="middle">0</text><text x="354.1" y="680.8" text-anchor="middle">5</text><text x="669.1" y="680.8" text-anchor="middle">10</text><text x="983.1" y="680.8" text-anchor="middle">15</text>
<text x="511.5" y="698" text-anchor="middle" font-size="13">Time</text>
<text transform="translate(18,381.4) rotate(-90)" text-anchor="middle" font-size="13" letter-spacing="0.19">Number of Vehicles above Velocity Threshold</text>
</g>
<g shape-rendering="crispEdges">
<rect x="984" y="86" width="13" height="10" fill="#F4F4F4"/>
<rect x="985" y="87" width="11" height="1" fill="#3A3A3A"/>
<rect x="985" y="89" width="11" height="6" fill="#262626"/>
<path d="M990.5 89.200c1.600.5 2.500 1.600 2.700 3.300h-2.100v2.500h-1.200v-2.500h-2.100c.2-1.700 1.100-2.800 2.700-3.300z" fill="#F4F4F4" shape-rendering="geometricPrecision"/>
</g>
</svg>
<div class="abs status">
<span class="abs" style="left:1px;top:5px;line-height:13px;letter-spacing:-0.3px">Ready</span>
<div class="cell" style="left:863px;width:72px;padding-left:2px;text-align:left;letter-spacing:-0.3px;word-spacing:0.6px">Sample based</div>
<div class="cell" style="left:941px;width:49px;padding-left:2px;text-align:left;letter-spacing:-0.3px">T=10.000</div>
</div>
</div>
</body></html>
